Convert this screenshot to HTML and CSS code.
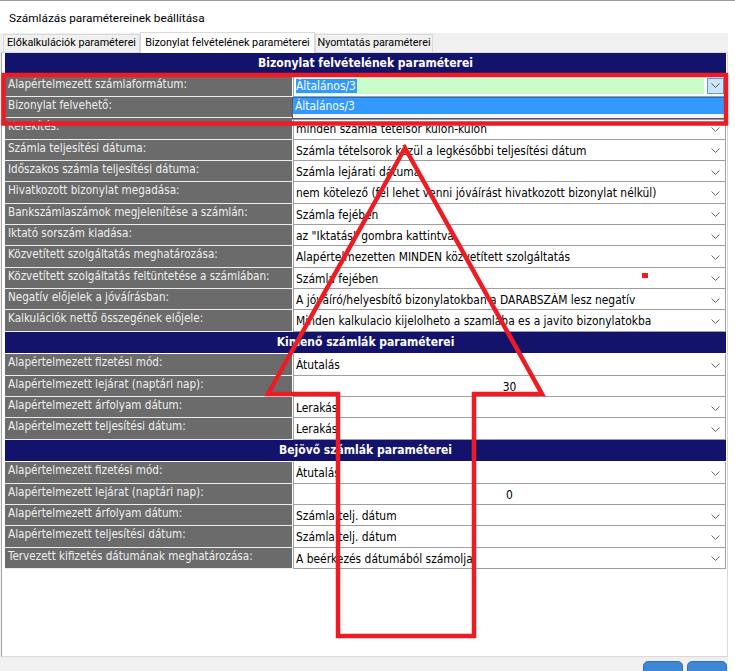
FILE: index.html
```html
<!DOCTYPE html>
<html lang="hu">
<head>
<meta charset="utf-8">
<title>Számlázás paramétereinek beállítása</title>
<link rel="stylesheet" href="styles.css">
</head>
<body>
<div class="window">
  <div class="titlebar">Számlázás paramétereinek beállítása</div>
  <div class="dialog">
    <div class="tabs">
      <div class="tab t1">Előkalkulációk paraméterei</div>
      <div class="tab t2 active">Bizonylat felvételének paraméterei</div>
      <div class="tab t3">Nyomtatás paraméterei</div>
    </div>
    <div class="panel">
      <div class="grid">
        <div class="hdr">Bizonylat felvételének paraméterei</div>
        <div class="row"><div class="lbl">Alapértelmezett számlaformátum:</div><div class="val editing"><span class="edit"><span class="sel">Általános/3</span></span><span class="btn"><svg class="chev" width="9" height="5" viewBox="0 0 9 5"><path d="M0.5 0.5 L4.5 4.5 L8.5 0.5" fill="none" stroke="#555" stroke-width="1"/></svg></span></div></div>
        <div class="row"><div class="lbl">Bizonylat felvehető:</div><div class="val open"><div class="drop"><div class="item">Általános/3</div></div></div></div>
        <div class="row"><div class="lbl">Kerekítés:</div><div class="val"><span class="txt">minden számla tételsor külön-külön</span><svg class="chev" width="9" height="5" viewBox="0 0 9 5"><path d="M0.5 0.5 L4.5 4.5 L8.5 0.5" fill="none" stroke="#666" stroke-width="1"/></svg></div></div>
        <div class="row"><div class="lbl">Számla teljesítési dátuma:</div><div class="val"><span class="txt">Számla tételsorok közül a legkésőbbi teljesítési dátum</span><svg class="chev" width="9" height="5" viewBox="0 0 9 5"><path d="M0.5 0.5 L4.5 4.5 L8.5 0.5" fill="none" stroke="#666" stroke-width="1"/></svg></div></div>
        <div class="row"><div class="lbl">Időszakos számla teljesítési dátuma:</div><div class="val"><span class="txt">Számla lejárati dátuma</span><svg class="chev" width="9" height="5" viewBox="0 0 9 5"><path d="M0.5 0.5 L4.5 4.5 L8.5 0.5" fill="none" stroke="#666" stroke-width="1"/></svg></div></div>
        <div class="row"><div class="lbl">Hivatkozott bizonylat megadása:</div><div class="val"><span class="txt">nem kötelező (fel lehet venni jóváírást hivatkozott bizonylat nélkül)</span><svg class="chev" width="9" height="5" viewBox="0 0 9 5"><path d="M0.5 0.5 L4.5 4.5 L8.5 0.5" fill="none" stroke="#666" stroke-width="1"/></svg></div></div>
        <div class="row"><div class="lbl">Bankszámlaszámok megjelenítése a számlán:</div><div class="val"><span class="txt">Számla fejében</span><svg class="chev" width="9" height="5" viewBox="0 0 9 5"><path d="M0.5 0.5 L4.5 4.5 L8.5 0.5" fill="none" stroke="#666" stroke-width="1"/></svg></div></div>
        <div class="row"><div class="lbl">Iktató sorszám kiadása:</div><div class="val"><span class="txt">az "Iktatás" gombra kattintva</span><svg class="chev" width="9" height="5" viewBox="0 0 9 5"><path d="M0.5 0.5 L4.5 4.5 L8.5 0.5" fill="none" stroke="#666" stroke-width="1"/></svg></div></div>
        <div class="row"><div class="lbl">Közvetített szolgáltatás meghatározása:</div><div class="val"><span class="txt">Alapértelmezetten MINDEN közvetített szolgáltatás</span><svg class="chev" width="9" height="5" viewBox="0 0 9 5"><path d="M0.5 0.5 L4.5 4.5 L8.5 0.5" fill="none" stroke="#666" stroke-width="1"/></svg></div></div>
        <div class="row"><div class="lbl">Közvetített szolgáltatás feltüntetése a számlában:</div><div class="val"><span class="txt">Számla fejében</span><svg class="chev" width="9" height="5" viewBox="0 0 9 5"><path d="M0.5 0.5 L4.5 4.5 L8.5 0.5" fill="none" stroke="#666" stroke-width="1"/></svg></div></div>
        <div class="row"><div class="lbl">Negatív előjelek a jóváírásban:</div><div class="val"><span class="txt">A jóváíró/helyesbítő bizonylatokban a DARABSZÁM lesz negatív</span><svg class="chev" width="9" height="5" viewBox="0 0 9 5"><path d="M0.5 0.5 L4.5 4.5 L8.5 0.5" fill="none" stroke="#666" stroke-width="1"/></svg></div></div>
        <div class="row"><div class="lbl">Kalkulációk nettő összegének előjele:</div><div class="val"><span class="txt">Minden kalkulacio kijelolheto a szamlaba es a javito bizonylatokba</span><svg class="chev" width="9" height="5" viewBox="0 0 9 5"><path d="M0.5 0.5 L4.5 4.5 L8.5 0.5" fill="none" stroke="#666" stroke-width="1"/></svg></div></div>

        <div class="hdr">Kimenő számlák paraméterei</div>
        <div class="row"><div class="lbl">Alapértelmezett fizetési mód:</div><div class="val"><span class="txt">Átutalás</span><svg class="chev" width="9" height="5" viewBox="0 0 9 5"><path d="M0.5 0.5 L4.5 4.5 L8.5 0.5" fill="none" stroke="#666" stroke-width="1"/></svg></div></div>
        <div class="row"><div class="lbl">Alapértelmezett lejárat (naptári nap):</div><div class="val num"><span class="txt">30</span></div></div>
        <div class="row"><div class="lbl">Alapértelmezett árfolyam dátum:</div><div class="val"><span class="txt">Lerakás</span><svg class="chev" width="9" height="5" viewBox="0 0 9 5"><path d="M0.5 0.5 L4.5 4.5 L8.5 0.5" fill="none" stroke="#666" stroke-width="1"/></svg></div></div>
        <div class="row"><div class="lbl">Alapértelmezett teljesítési dátum:</div><div class="val"><span class="txt">Lerakás</span><svg class="chev" width="9" height="5" viewBox="0 0 9 5"><path d="M0.5 0.5 L4.5 4.5 L8.5 0.5" fill="none" stroke="#666" stroke-width="1"/></svg></div></div>

        <div class="hdr">Bejövő számlák paraméterei</div>
        <div class="row"><div class="lbl">Alapértelmezett fizetési mód:</div><div class="val"><span class="txt">Átutalás</span><svg class="chev" width="9" height="5" viewBox="0 0 9 5"><path d="M0.5 0.5 L4.5 4.5 L8.5 0.5" fill="none" stroke="#666" stroke-width="1"/></svg></div></div>
        <div class="row"><div class="lbl">Alapértelmezett lejárat (naptári nap):</div><div class="val num"><span class="txt">0</span></div></div>
        <div class="row"><div class="lbl">Alapértelmezett árfolyam dátum:</div><div class="val"><span class="txt">Számla telj. dátum</span><svg class="chev" width="9" height="5" viewBox="0 0 9 5"><path d="M0.5 0.5 L4.5 4.5 L8.5 0.5" fill="none" stroke="#666" stroke-width="1"/></svg></div></div>
        <div class="row"><div class="lbl">Alapértelmezett teljesítési dátum:</div><div class="val"><span class="txt">Számla telj. dátum</span><svg class="chev" width="9" height="5" viewBox="0 0 9 5"><path d="M0.5 0.5 L4.5 4.5 L8.5 0.5" fill="none" stroke="#666" stroke-width="1"/></svg></div></div>
        <div class="row"><div class="lbl">Tervezett kifizetés dátumának meghatározása:</div><div class="val"><span class="txt">A beérkezés dátumából számolja</span><svg class="chev" width="9" height="5" viewBox="0 0 9 5"><path d="M0.5 0.5 L4.5 4.5 L8.5 0.5" fill="none" stroke="#666" stroke-width="1"/></svg></div></div>
      </div>
    </div>
    <div class="footer">
      <span class="fbtn"></span>
      <span class="fbtn"></span>
    </div>
  </div>
</div>
<svg class="annot" width="735" height="671" viewBox="0 0 735 671">
  <rect x="3.5" y="75" width="722.5" height="48.5" fill="none" stroke="#ed1c24" stroke-width="4.5"/>
  <polygon points="405,148 542,394 474,394 474,636 338,636 338,394 268,394" fill="none" stroke="#ed1c24" stroke-width="4.5" stroke-linejoin="miter"/>
  <rect x="642" y="273" width="6" height="5" fill="#ed1c24"/>
</svg>
</body>
</html>
```
FILE: styles.css
```css
* { box-sizing: border-box; margin: 0; padding: 0; }
html, body { width: 735px; height: 671px; overflow: hidden; background: #fff; }
body {
  position: relative;
  font-family: "DejaVu Sans Condensed", "DejaVu Sans", sans-serif;
  font-size: 11.6px;
  color: #000;
}
.window {
  height: 671px;
  border-top: 1px solid #9a9a9a;
  display: flex;
  flex-direction: column;
}
.titlebar {
  flex: none;
  height: 32px;
  padding: 9px 0 0 9px;
  font-family: Roboto, "Noto Sans", sans-serif;
  font-size: 11.8px;
  line-height: 16px;
  color: #000;
}
.dialog {
  flex: 1;
  min-height: 0;
  width: 728px;
  background: #f0f0f0;
  display: flex;
  flex-direction: column;
}
.tabs {
  flex: none;
  height: 19px;
  display: flex;
  align-items: flex-end;
  padding-left: 3px;
  position: relative;
  z-index: 2;
}
.tab {
  height: 18px;
  border: 1px solid #d9d9d9;
  border-bottom: none;
  background: #f0f0f0;
  font-family: Roboto, "Noto Sans", sans-serif;
  font-size: 10.8px;
  line-height: 16px;
  white-space: nowrap;
  text-align: center;
  color: #000;
}
.t1 { width: 137px; }
.t2 { width: 175px; }
.t3 { width: 118px; }
.tab.active {
  height: 21px;
  background: #fff;
  padding-top: 2px;
  margin-bottom: -1px;
}
.panel {
  flex: none;
  height: 605px;
  margin-left: 1px;
  width: 727px;
  background: #fff;
  border: 1px solid #d9d9d9;
  border-left-color: #a8a8a8;
  padding: 0 1px 0 3px;
}
.grid { display: flex; flex-direction: column; }
.hdr {
  height: 22.67px;
  background: #13136c;
  color: #fff;
  font-weight: bold;
  font-size: 12px;
  text-align: center;
  line-height: 20px;
  border-bottom: 1px solid #fff;
}
.row {
  height: 21.33px;
  display: grid;
  grid-template-columns: 287px 1fr;
}
.lbl {
  background: #6b6b6b;
  color: #f0f0f0;
  padding: 1px 0 0 3px;
  border-bottom: 1px solid #ececec;
  white-space: nowrap;
  overflow: hidden;
  line-height: 15px;
}
.val {
  margin-left: 1px;
  border-left: 1px solid #a0a0a0;
  border-right: 1px solid #a0a0a0;
  border-bottom: 1px solid #a0a0a0;
  display: flex;
  align-items: center;
  padding: 2px 0 0 2px;
  white-space: nowrap;
  font-size: 11.9px;
}
.val .txt { flex: 1; overflow: hidden; }
.val .chev { margin: 0 5px 0 4px; flex: none; }
.val.num .txt { text-align: center; padding-right: 2px; }
.val.editing {
  padding: 2px 1px 2px 2px;
  gap: 3px;
  align-items: stretch;
}
.edit {
  flex: 1;
  background: #c8fcc8;
  display: flex;
  align-items: center;
}
.sel {
  background: #3399ff;
  color: #fff;
  padding: 0 1px 0 0;
  line-height: 14px;
}
.btn {
  width: 17px;
  background: #cce4f7;
  border: 1px solid #569de5;
  display: flex;
  align-items: center;
  justify-content: center;
}
.val.open { position: relative; }
.drop {
  position: absolute;
  left: -2px;
  right: -1px;
  top: 0;
  height: 22px;
  background: #f4f4f4;
  border: 1px solid #5a5a5a;
  border-top-color: #1c6fc9;
  padding-bottom: 3px;
  box-shadow: 0 1px 0 #9a9a9a;
  z-index: 3;
}
.item {
  height: 16px;
  background: #3399ff;
  color: #fff;
  padding: 1px 0 0 2px;
  line-height: 14px;
}
.footer {
  flex: 1;
  min-height: 0;
  overflow: hidden;
  display: flex;
  justify-content: flex-end;
  gap: 4px;
  padding: 4px 1px 0 0;
}
.fbtn {
  flex: none;
  width: 40px;
  height: 20px;
  border-radius: 5px;
  background: #3f87d4;
  border: 1px solid #2f6fb5;
}
.annot {
  position: absolute;
  left: 0;
  top: 0;
  pointer-events: none;
  z-index: 10;
}
```
